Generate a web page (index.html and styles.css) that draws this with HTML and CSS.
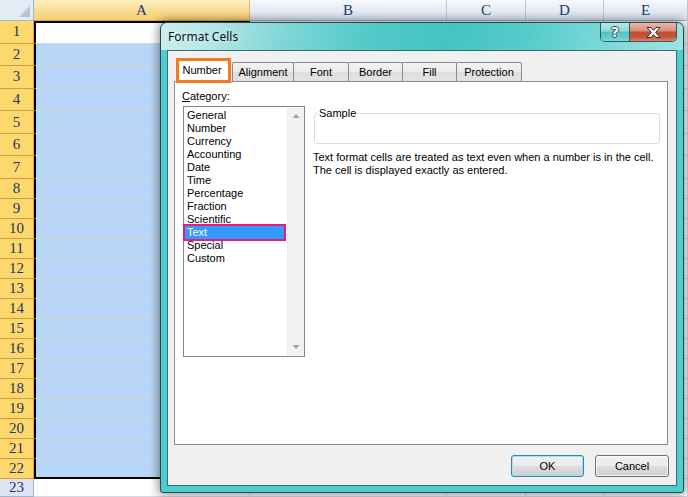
FILE: index.html
```html
<!DOCTYPE html>
<html>
<head>
<meta charset="utf-8">
<title>Format Cells</title>
<link rel="stylesheet" href="styles.css">
</head>
<body>
<div class="sheet">
  <div class="row hdr"><div class="corner"><span class="tri"></span></div><div class="ch sel">A</div><div class="ch">B</div><div class="ch">C</div><div class="ch">D</div><div class="ch">E</div></div>
  <div class="row tall"><div class="rh">1</div><div class="c a active"></div><div class="c"></div><div class="c"></div><div class="c"></div><div class="c"></div></div>
  <div class="row tall"><div class="rh">2</div><div class="c a"></div><div class="c"></div><div class="c"></div><div class="c"></div><div class="c"></div></div>
  <div class="row tall"><div class="rh">3</div><div class="c a"></div><div class="c"></div><div class="c"></div><div class="c"></div><div class="c"></div></div>
  <div class="row tall"><div class="rh">4</div><div class="c a"></div><div class="c"></div><div class="c"></div><div class="c"></div><div class="c"></div></div>
  <div class="row tall"><div class="rh">5</div><div class="c a"></div><div class="c"></div><div class="c"></div><div class="c"></div><div class="c"></div></div>
  <div class="row tall"><div class="rh">6</div><div class="c a"></div><div class="c"></div><div class="c"></div><div class="c"></div><div class="c"></div></div>
  <div class="row tall"><div class="rh">7</div><div class="c a"></div><div class="c"></div><div class="c"></div><div class="c"></div><div class="c"></div></div>
  <div class="row"><div class="rh">8</div><div class="c a"></div><div class="c"></div><div class="c"></div><div class="c"></div><div class="c"></div></div>
  <div class="row"><div class="rh">9</div><div class="c a"></div><div class="c"></div><div class="c"></div><div class="c"></div><div class="c"></div></div>
  <div class="row"><div class="rh">10</div><div class="c a"></div><div class="c"></div><div class="c"></div><div class="c"></div><div class="c"></div></div>
  <div class="row"><div class="rh">11</div><div class="c a"></div><div class="c"></div><div class="c"></div><div class="c"></div><div class="c"></div></div>
  <div class="row"><div class="rh">12</div><div class="c a"></div><div class="c"></div><div class="c"></div><div class="c"></div><div class="c"></div></div>
  <div class="row"><div class="rh">13</div><div class="c a"></div><div class="c"></div><div class="c"></div><div class="c"></div><div class="c"></div></div>
  <div class="row"><div class="rh">14</div><div class="c a"></div><div class="c"></div><div class="c"></div><div class="c"></div><div class="c"></div></div>
  <div class="row"><div class="rh">15</div><div class="c a"></div><div class="c"></div><div class="c"></div><div class="c"></div><div class="c"></div></div>
  <div class="row"><div class="rh">16</div><div class="c a"></div><div class="c"></div><div class="c"></div><div class="c"></div><div class="c"></div></div>
  <div class="row"><div class="rh">17</div><div class="c a"></div><div class="c"></div><div class="c"></div><div class="c"></div><div class="c"></div></div>
  <div class="row"><div class="rh">18</div><div class="c a"></div><div class="c"></div><div class="c"></div><div class="c"></div><div class="c"></div></div>
  <div class="row"><div class="rh">19</div><div class="c a"></div><div class="c"></div><div class="c"></div><div class="c"></div><div class="c"></div></div>
  <div class="row"><div class="rh">20</div><div class="c a"></div><div class="c"></div><div class="c"></div><div class="c"></div><div class="c"></div></div>
  <div class="row"><div class="rh">21</div><div class="c a"></div><div class="c"></div><div class="c"></div><div class="c"></div><div class="c"></div></div>
  <div class="row"><div class="rh">22</div><div class="c a end"></div><div class="c"></div><div class="c"></div><div class="c"></div><div class="c"></div></div>
  <div class="row last"><div class="rh plain">23</div><div class="c"></div><div class="c"></div><div class="c"></div><div class="c"></div><div class="c"></div></div>
</div>

<div class="dialog">
  <div class="titlebar">
    <span class="title">Format Cells</span>
    <div class="capbtns">
      <div class="cb help">?</div>
      <div class="cb close">
        <svg width="15" height="11" viewBox="0 0 15 11"><path d="M1 0.5 H5 L7.5 3.3 L10 0.5 H14 L9.6 5.5 L14 10.5 H10 L7.5 7.7 L5 10.5 H1 L5.4 5.5 Z" fill="#fff" stroke="#3a2a28" stroke-width="1" stroke-linejoin="round"/></svg>
      </div>
    </div>
  </div>
  <div class="client">
    <div class="tabs">
      <div class="tab active">Number</div>
      <div class="tab t-align">Alignment</div>
      <div class="tab t-font">Font</div>
      <div class="tab t-border">Border</div>
      <div class="tab t-fill">Fill</div>
      <div class="tab t-prot">Protection</div>
    </div>
    <div class="panel">
      <div class="leftcol">
        <div class="lbl"><u>C</u>ategory:</div>
        <div class="listbox">
          <div class="items">
            <div class="item">General</div>
            <div class="item">Number</div>
            <div class="item">Currency</div>
            <div class="item">Accounting</div>
            <div class="item">Date</div>
            <div class="item">Time</div>
            <div class="item">Percentage</div>
            <div class="item">Fraction</div>
            <div class="item">Scientific</div>
            <div class="item sel">Text</div>
            <div class="item">Special</div>
            <div class="item">Custom</div>
          </div>
          <div class="vscroll"><span class="arr up"></span><span class="arr down"></span></div>
        </div>
      </div>
      <div class="rightcol">
        <div class="sample"><span class="sample-lbl">Sample</span></div>
        <p class="desc">Text format cells are treated as text even when a number is in the cell.<br>The cell is displayed exactly as entered.</p>
      </div>
    </div>
    <div class="buttons">
      <button class="btn default">OK</button>
      <button class="btn cancel">Cancel</button>
    </div>
  </div>
</div>
</body>
</html>
```

FILE: styles.css
```css
* { box-sizing: border-box; margin: 0; padding: 0; }
html, body { width: 688px; height: 497px; overflow: hidden; background: #fff; }
body { position: relative; font-family: "Liberation Sans", Arial, sans-serif; font-size: 11px; color: #000; }

/* ---------- spreadsheet ---------- */
.sheet { display: flex; flex-direction: column; width: 688px; }
.row { display: grid; grid-template-columns: 34px 216px 197px 79px 78px 84px; height: 20px; flex: none; }
.row.hdr { height: 21px; }
.row.tall { height: 22.57px; }
.row.last { height: 18px; }

.corner { position: relative; background: #e3ebf5; border-right: 1px solid #9eb6ce; border-bottom: 1px solid #9eb6ce; }
.corner .tri { position: absolute; right: 3px; bottom: 3px; width: 11px; height: 11px; background: #b7c3d1; clip-path: polygon(100% 0, 100% 100%, 0 100%); }

.ch { display: flex; align-items: center; justify-content: center; background: linear-gradient(#f7f9fc, #e2e9f2 60%, #d9e3ee); border-right: 1px solid #b6c8dc; border-bottom: 1px solid #9eb6ce; font-family: "Liberation Serif", "Times New Roman", serif; font-size: 15px; color: #22396a; }
.ch.sel { background: linear-gradient(#fdefbe, #f9dc92 55%, #f6cf72); border-right-color: #e3b565; border-bottom: 1px solid #e0a53f; }

.rh { display: flex; align-items: center; justify-content: center; background: #fdd86c; border-bottom: 1px solid #cf9c48; border-right: 1px solid #e0a33a; font-family: "Liberation Serif", "Times New Roman", serif; font-size: 15px; color: #1f3465; }
.rh.plain { background: #dce6f2; border-bottom-color: #9eb6ce; border-right-color: #9eb6ce; }

.c { background: #fff; border-right: 1px solid #d4dbe6; border-bottom: 1px solid #d4dbe6; }
.c.a { background: #b8d6f7; border-left: 2px solid #000; border-right: none; border-bottom: 1px solid #d6d6d2; }
.c.a.active { background: #fff; border-top: 2px solid #000; }
.c.a.end { border-bottom: 2px solid #000; }

/* ---------- dialog ---------- */
.dialog { position: absolute; left: 160px; top: 22px; width: 524px; height: 471px; display: flex; flex-direction: column; border: 1px solid #27474d; border-radius: 7px 7px 3px 3px; background: #4bcfce; box-shadow: 0 0 10px 2px rgba(0, 0, 0, 0.42); }

.titlebar { height: 27px; flex: none; display: flex; align-items: flex-start; border-radius: 6px 6px 0 0; background: linear-gradient(100deg, #cdeeee 0%, #b3e6e6 10%, #7fd6d6 24%, #52c9c9 40%, #43c4c4 55%, #56cbcb 70%, #86dada 88%, #9fe2e2 100%); }
.title { padding-left: 7px; line-height: 27px; font-family: "Noto Sans", "Open Sans", sans-serif; font-size: 12px; color: #111; text-shadow: 0 0 6px rgba(255, 255, 255, 0.8); }
.capbtns { margin-left: auto; margin-right: 6px; display: flex; height: 19px; border: 1px solid #35585e; border-top: none; border-radius: 0 0 5px 5px; overflow: hidden; }
.cb { height: 18px; display: flex; align-items: center; justify-content: center; }
.cb.help { width: 29px; border-right: 1px solid #35585e; background: linear-gradient(#b8e8e8, #8ad9d9 45%, #52c3c3 52%, #62cbcb 80%, #86d8d8); font-family: "DejaVu Sans", sans-serif; font-weight: bold; font-size: 14px; color: #fff; text-shadow: 1px 0 0 #2d4a4f, -1px 0 0 #2d4a4f, 0 1px 0 #2d4a4f, 0 -1px 0 #2d4a4f; }
.cb.close { width: 46px; background: linear-gradient(#e9b8aa, #d98f79 42%, #c34d32 52%, #c65639 78%, #d7866a); }

.client { flex: 1; margin: 0 6px 6px; background: #f0f0f0; border: 1px solid #3e6c73; display: flex; flex-direction: column; }

.tabs { display: flex; align-items: flex-start; height: 23px; margin: 7px 0 0 8px; flex: none; }
.tab { height: 19px; margin-top: 4px; margin-left: -1px; padding-bottom: 1px; display: flex; align-items: center; justify-content: center; border: 1px solid #898c95; border-bottom: none; border-radius: 2px 2px 0 0; background: linear-gradient(#f3f3f3, #ebebeb 50%, #dedede 51%, #e3e3e3); color: #000; }
.tab.active { width: 55px; height: 25px; margin-top: 0; margin-left: 0; padding: 0 3px 2px 0; border: 3px solid #f47a20; border-radius: 0; background: #fff; position: relative; z-index: 1; }
.t-align { width: 62px; margin-left: 1px; }
.t-font { width: 56px; }
.t-border { width: 55px; }
.t-fill { width: 55px; }
.t-prot { width: 66px; }

.panel { height: 364px; flex: none; margin: 0 8px 0 6px; background: #fff; border: 1px solid #898c95; display: flex; padding: 8px 0 0 8px; }
.leftcol { display: flex; flex-direction: column; }
.lbl { line-height: 13px; margin-left: -1px; }
.lbl u { text-decoration: underline; }
.listbox { margin-top: 3px; width: 122px; height: 251px; border: 1px solid #828790; display: flex; background: #fff; }
.items { flex: 1; padding: 2px 3px 0 1px; }
.item { line-height: 13px; height: 13px; padding-left: 2px; white-space: nowrap; }
.item.sel { background: #3399ff; color: #fff; outline: 2px solid #ec1a7d; }
.vscroll { width: 17px; background: #f2f2f2; border-left: 1px solid #ebebeb; display: flex; flex-direction: column; justify-content: space-between; align-items: center; padding: 7px 0 7px; }
.arr { width: 7px; height: 4px; background: #a3a3a3; }
.arr.up { clip-path: polygon(50% 0, 100% 100%, 0 100%); }
.arr.down { clip-path: polygon(0 0, 100% 0, 50% 100%); }

.rightcol { margin-left: 9px; padding-top: 23px; width: 346px; }
.sample { position: relative; height: 31px; border: 1px solid #d5dfe5; border-radius: 3px; }
.sample-lbl { position: absolute; top: -7px; left: 4px; line-height: 13px; background: #fff; padding-right: 1px; }
.desc { margin: 7px 0 0 -1px; line-height: 12.5px; white-space: nowrap; }

.buttons { display: flex; justify-content: flex-end; gap: 11px; margin-top: 10px; padding-right: 7px; height: 22px; flex: none; }
.btn { width: 73px; height: 22px; border: 1px solid #707070; border-radius: 3px; background: linear-gradient(#f2f2f2, #ebebeb 48%, #dddddd 52%, #cfcfcf); font-family: "Liberation Sans", Arial, sans-serif; font-size: 11px; color: #000; box-shadow: inset 0 0 0 1px rgba(255, 255, 255, 0.7); }
.btn.default { border-color: #3c7fb1; box-shadow: inset 0 0 0 1px #9fe3f7; }
.btn.cancel { width: 74px; }
```
